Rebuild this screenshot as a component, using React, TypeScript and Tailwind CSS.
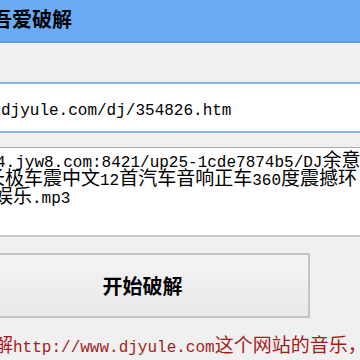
import React from 'react';

// split a string into latin / CJK runs so latin gets the narrow mono face
const Mixed: React.FC<{ text: string }> = ({ text }) => {
  const parts = text.split(/([\u0000-\u00ff]+)/).filter(Boolean);
  return (
    <>
      {parts.map((p, i) =>
        /^[\u0000-\u00ff]+$/.test(p) ? (
          <span key={i} className="font-['Liberation_Mono',monospace] text-[16px] leading-none">
            {p}
          </span>
        ) : (
          <span key={i} className="text-[19px] leading-none">
            {p}
          </span>
        )
      )}
    </>
  );
};

const App: React.FC = () => {
  return (
    <div className="w-[360px] h-[360px] overflow-hidden bg-[#f0f0f0] font-['Noto_Sans_CJK_SC',sans-serif] text-black">
      {/* Title bar */}
      <div className="h-[43px] bg-[#69abf5] border-b-2 border-[#5c9ae2] flex items-center">
        <span className="-ml-[8px] -mt-[3px] text-[20px] font-bold leading-none whitespace-nowrap">吾爱破解</span>
      </div>

      {/* URL input */}
      <div className="mt-[39px] h-[51px] bg-white border-y-2 border-[#84b8ec] pt-[13px] whitespace-nowrap overflow-hidden">
        <div className="ml-[1px] h-[18px] text-[19px] leading-none">
          <Mixed text="djyule.com/dj/354826.htm" />
        </div>
      </div>

      {/* Result box */}
      <div className="mt-[14px] h-[90px] bg-white border-t border-[#a9a9a9] border-b-2 border-b-[#c8c8c8] pt-[1px] whitespace-nowrap overflow-hidden text-[19px] leading-none">
        <div className="-ml-[4px] h-[18px]">
          <Mixed text="4.jyw8.com:8421/up25-1cde7874b5/DJ余意" />
        </div>
        <div className="-ml-[14px] h-[18px]">
          <Mixed text="长极车震中文12首汽车音响正车360度震撼环" />
        </div>
        <div className="-ml-[6px] h-[18px]">
          <Mixed text="娱乐.mp3" />
        </div>
      </div>

      {/* Action button */}
      <div className="mt-[16px] flex">
        <button className="-ml-[25px] w-[335px] h-[65px] border-2 border-[#c4c4c4] bg-gradient-to-b from-[#f4f4f4] to-[#e9e9e9] flex items-center justify-center text-[20px] font-bold">
          开始破解
        </button>
      </div>

      {/* Hint */}
      <div className="mt-[16px] -ml-[6px] h-[20px] whitespace-nowrap text-[#a31d1d] text-[19px] leading-none">
        <Mixed text="解http://www.djyule.com这个网站的音乐，" />
      </div>
    </div>
  );
};

export default App;
